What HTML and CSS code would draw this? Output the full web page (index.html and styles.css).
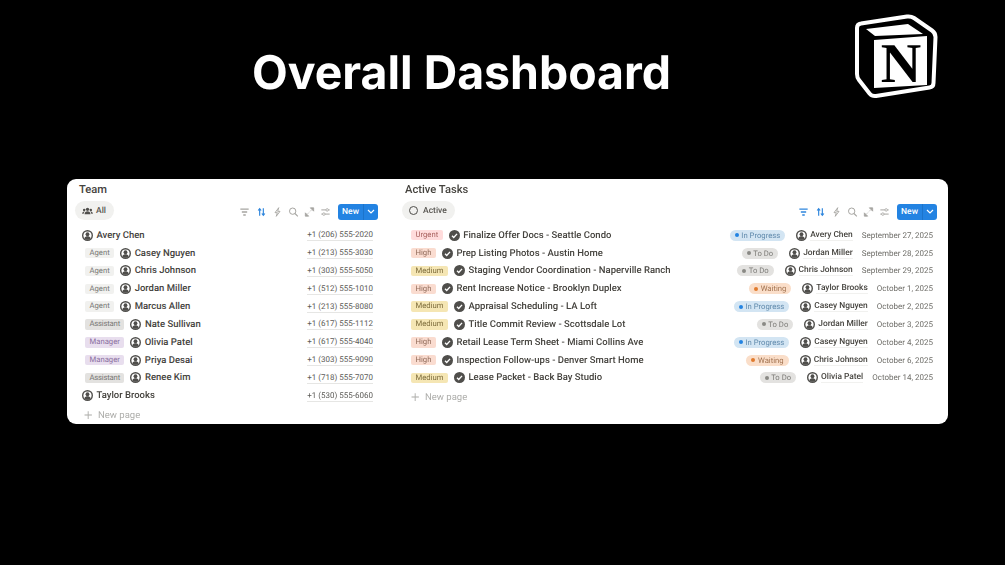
FILE: index.html
```html
<!DOCTYPE html>
<html lang="en">
<head>
<meta charset="utf-8">
<title>Overall Dashboard</title>
<link rel="stylesheet" href="styles.css">
</head>
<body>
<svg class="defs" width="0" height="0" aria-hidden="true">
  <symbol id="person" viewBox="0 0 20 20"><circle cx="10" cy="10" r="10" fill="#4f4e4b"/><circle cx="10" cy="10" r="7.4" fill="#fff"/><circle cx="10" cy="7.800" r="3.500" fill="#4f4e4b"/><path d="M4.200 14.800c1-2.400 3.400-3.400 5.800-3.400s4.800 1 5.800 3.400c-1.400 1.700-3.600 2.800-5.800 2.800s-4.400-1.100-5.800-2.800z" fill="#4f4e4b"/></symbol>
  <symbol id="check" viewBox="0 0 20 20"><circle cx="10" cy="10" r="10" fill="#4f4e4b"/><path d="M5.500 10.400l3.100 3.100 6-6.500" fill="none" stroke="#fff" stroke-width="2.500"/></symbol>
  <symbol id="filter" viewBox="0 0 12 12"><path d="M1 2.500h10M2.800 6h6.400M4.500 9.500h3" fill="none" stroke="currentColor" stroke-width="1.700"/></symbol>
  <symbol id="sort" viewBox="0 0 12 12"><path d="M3.800 10.500V2M2 4.200l1.800-2.200 1.800 2.200M8.200 1.500V10M6.400 7.800l1.800 2.200 1.800-2.200" fill="none" stroke="currentColor" stroke-width="1.400"/></symbol>
  <symbol id="bolt" viewBox="0 0 12 12"><path d="M7.500.8L3 6.800h2.800L4.500 11.200 9 5.200H6.200z" fill="none" stroke="currentColor" stroke-width="1.100"/></symbol>
  <symbol id="search" viewBox="0 0 12 12"><circle cx="5" cy="5" r="3.800" fill="none" stroke="currentColor" stroke-width="1.200"/><path d="M7.800 7.800l3.400 3.400" stroke="currentColor" stroke-width="1.300"/></symbol>
  <symbol id="expand" viewBox="0 0 12 12"><path d="M7 1h4v4zM5 11H1V7zM8 4L6.800 5.200M4 8l1.200-1.200" fill="currentColor" stroke="currentColor" stroke-width="1"/></symbol>
  <symbol id="sliders" viewBox="0 0 12 12"><path d="M1 3.500h5.500M9.500 3.500H11M1 8.500h1.500M5.500 8.500H11" stroke="currentColor" stroke-width="1.200"/><circle cx="8" cy="3.500" r="1.500" fill="none" stroke="currentColor"/><circle cx="4" cy="8.500" r="1.500" fill="none" stroke="currentColor"/></symbol>
  <symbol id="people" viewBox="0 0 16 12"><circle cx="8" cy="3.500" r="2.500" fill="#4f4e4b"/><path d="M3.500 11c0-3 2-4.500 4.500-4.500s4.500 1.500 4.500 4.500z" fill="#4f4e4b"/><circle cx="3" cy="4.500" r="1.800" fill="#4f4e4b"/><circle cx="13" cy="4.500" r="1.800" fill="#4f4e4b"/><path d="M0 10c0-2 1.200-3.400 3-3.400.4 0 .7.100 1 .2C2.800 7.800 2.400 9 2.400 10zM16 10c0-2-1.200-3.400-3-3.400-.4 0-.7.100-1 .2 1.200 1 1.600 2.200 1.600 3.200z" fill="#4f4e4b"/></symbol>
</svg>

<header class="hero">
  <h1 class="hero-title">Overall Dashboard</h1>
  <svg class="notion-logo" viewBox="0 0 84 86" aria-label="Notion logo">
    <path d="M3 15Q3 11 7 10.500L53 3.500Q57 3 60 5L78 17.500Q81.500 20 81.500 24L79.500 70Q79.500 74 75.500 74.500L22 83Q18 83.500 15.500 80.500L5 67Q3 64.500 3 61Z" fill="#000" stroke="#fff" stroke-width="4" stroke-linejoin="round"/>
    <path d="M12 16 54 11 69 21 21 23Z" fill="#fff"/>
    <path d="M20 27 73 23 73 72 20 75Z" fill="#fff"/>
    <text class="notion-n" x="47" y="69" text-anchor="middle">N</text>
  </svg>
</header>

<main class="board">
  <section class="panel panel-team">
    <h2 class="panel-title">Team</h2>
    <div class="toolbar">
      <span class="view-pill"><svg class="pill-icon-people"><use href="#people"/></svg>All</span>
      <div class="tools">
        <svg class="tool"><use href="#filter"/></svg>
        <svg class="tool tool-on"><use href="#sort"/></svg>
        <svg class="tool"><use href="#bolt"/></svg>
        <svg class="tool"><use href="#search"/></svg>
        <svg class="tool"><use href="#expand"/></svg>
        <svg class="tool"><use href="#sliders"/></svg>
        <span class="new-btn"><span class="new-label">New</span><span class="new-caret"><svg width="8" height="5" viewBox="0 0 8 5"><path d="M1 1l3 3 3-3" fill="none" stroke="#fff" stroke-width="1.200"/></svg></span></span>
      </div>
    </div>
    <ul class="rows">
      <li class="row row-top"><svg class="ico"><use href="#person"/></svg><span class="name">Avery Chen</span><span class="phone">+1 (206) 555-2020</span></li>
      <li class="row"><span class="tag tag-gray">Agent</span><svg class="ico"><use href="#person"/></svg><span class="name">Casey Nguyen</span><span class="phone">+1 (213) 555-3030</span></li>
      <li class="row"><span class="tag tag-gray">Agent</span><svg class="ico"><use href="#person"/></svg><span class="name">Chris Johnson</span><span class="phone">+1 (303) 555-5050</span></li>
      <li class="row"><span class="tag tag-gray">Agent</span><svg class="ico"><use href="#person"/></svg><span class="name">Jordan Miller</span><span class="phone">+1 (512) 555-1010</span></li>
      <li class="row"><span class="tag tag-gray">Agent</span><svg class="ico"><use href="#person"/></svg><span class="name">Marcus Allen</span><span class="phone">+1 (213) 555-8080</span></li>
      <li class="row"><span class="tag tag-dark">Assistant</span><svg class="ico"><use href="#person"/></svg><span class="name">Nate Sullivan</span><span class="phone">+1 (617) 555-1112</span></li>
      <li class="row"><span class="tag tag-purple">Manager</span><svg class="ico"><use href="#person"/></svg><span class="name">Olivia Patel</span><span class="phone">+1 (617) 555-4040</span></li>
      <li class="row"><span class="tag tag-purple">Manager</span><svg class="ico"><use href="#person"/></svg><span class="name">Priya Desai</span><span class="phone">+1 (303) 555-9090</span></li>
      <li class="row"><span class="tag tag-dark">Assistant</span><svg class="ico"><use href="#person"/></svg><span class="name">Renee Kim</span><span class="phone">+1 (718) 555-7070</span></li>
      <li class="row row-top"><svg class="ico"><use href="#person"/></svg><span class="name">Taylor Brooks</span><span class="phone">+1 (530) 555-6060</span></li>
    </ul>
    <div class="new-page"><span class="plus">+</span>New page</div>
  </section>

  <section class="panel panel-tasks">
    <h2 class="panel-title">Active Tasks</h2>
    <div class="toolbar">
      <span class="view-pill"><span class="ring"></span>Active</span>
      <div class="tools">
        <svg class="tool tool-on"><use href="#filter"/></svg>
        <svg class="tool tool-on"><use href="#sort"/></svg>
        <svg class="tool"><use href="#bolt"/></svg>
        <svg class="tool"><use href="#search"/></svg>
        <svg class="tool"><use href="#expand"/></svg>
        <svg class="tool"><use href="#sliders"/></svg>
        <span class="new-btn"><span class="new-label">New</span><span class="new-caret"><svg width="8" height="5" viewBox="0 0 8 5"><path d="M1 1l3 3 3-3" fill="none" stroke="#fff" stroke-width="1.200"/></svg></span></span>
      </div>
    </div>
    <ul class="rows">
      <li class="row"><span class="tag tag-red">Urgent</span><svg class="ico"><use href="#check"/></svg><span class="name">Finalize Offer Docs - Seattle Condo</span><span class="meta"><span class="status st-blue"><i class="dot"></i>In Progress</span><svg class="ico"><use href="#person"/></svg><span class="owner">Avery Chen</span><span class="date">September 27, 2025</span></span></li>
      <li class="row"><span class="tag tag-peach">High</span><svg class="ico"><use href="#check"/></svg><span class="name">Prep Listing Photos - Austin Home</span><span class="meta"><span class="status st-gray"><i class="dot"></i>To Do</span><svg class="ico"><use href="#person"/></svg><span class="owner">Jordan Miller</span><span class="date">September 28, 2025</span></span></li>
      <li class="row"><span class="tag tag-yellow">Medium</span><svg class="ico"><use href="#check"/></svg><span class="name">Staging Vendor Coordination - Naperville Ranch</span><span class="meta"><span class="status st-gray"><i class="dot"></i>To Do</span><svg class="ico"><use href="#person"/></svg><span class="owner">Chris Johnson</span><span class="date">September 29, 2025</span></span></li>
      <li class="row"><span class="tag tag-peach">High</span><svg class="ico"><use href="#check"/></svg><span class="name">Rent Increase Notice - Brooklyn Duplex</span><span class="meta"><span class="status st-orange"><i class="dot"></i>Waiting</span><svg class="ico"><use href="#person"/></svg><span class="owner">Taylor Brooks</span><span class="date">October 1, 2025</span></span></li>
      <li class="row"><span class="tag tag-yellow">Medium</span><svg class="ico"><use href="#check"/></svg><span class="name">Appraisal Scheduling - LA Loft</span><span class="meta"><span class="status st-blue"><i class="dot"></i>In Progress</span><svg class="ico"><use href="#person"/></svg><span class="owner">Casey Nguyen</span><span class="date">October 2, 2025</span></span></li>
      <li class="row"><span class="tag tag-yellow">Medium</span><svg class="ico"><use href="#check"/></svg><span class="name">Title Commit Review - Scottsdale Lot</span><span class="meta"><span class="status st-gray"><i class="dot"></i>To Do</span><svg class="ico"><use href="#person"/></svg><span class="owner">Jordan Miller</span><span class="date">October 3, 2025</span></span></li>
      <li class="row"><span class="tag tag-peach">High</span><svg class="ico"><use href="#check"/></svg><span class="name">Retail Lease Term Sheet - Miami Collins Ave</span><span class="meta"><span class="status st-blue"><i class="dot"></i>In Progress</span><svg class="ico"><use href="#person"/></svg><span class="owner">Casey Nguyen</span><span class="date">October 4, 2025</span></span></li>
      <li class="row"><span class="tag tag-peach">High</span><svg class="ico"><use href="#check"/></svg><span class="name">Inspection Follow-ups - Denver Smart Home</span><span class="meta"><span class="status st-orange"><i class="dot"></i>Waiting</span><svg class="ico"><use href="#person"/></svg><span class="owner">Chris Johnson</span><span class="date">October 6, 2025</span></span></li>
      <li class="row"><span class="tag tag-yellow">Medium</span><svg class="ico"><use href="#check"/></svg><span class="name">Lease Packet - Back Bay Studio</span><span class="meta"><span class="status st-gray"><i class="dot"></i>To Do</span><svg class="ico"><use href="#person"/></svg><span class="owner">Olivia Patel</span><span class="date">October 14, 2025</span></span></li>
    </ul>
    <div class="new-page"><span class="plus">+</span>New page</div>
  </section>
</main>
</body>
</html>
```

FILE: styles.css
```css
* { box-sizing: border-box; }
html, body { margin: 0; padding: 0; }
body {
  width: 1005px;
  height: 565px;
  overflow: hidden;
  background: #000;
  font-family: Roboto, "Noto Sans", sans-serif;
  color: #37352f;
  text-rendering: geometricPrecision;
}
.defs { position: absolute; }

.hero {
  height: 179px;
  padding: 13px 67px 0 252px;
  display: flex;
  justify-content: space-between;
  align-items: flex-start;
  filter: blur(0.3px);
}
.hero-title {
  margin: 28px 0 0;
  font-family: Inter, "Liberation Sans", sans-serif;
  font-size: 46.400px;
  line-height: 64px;
  font-weight: 700;
  color: #fff;
  white-space: nowrap;
}
.notion-logo { width: 84px; height: 86px; flex: none; }
.notion-n {
  font-family: "Liberation Serif", serif;
  font-weight: 700;
  font-size: 56px;
  fill: #000;
}

.board {
  height: 245px;
  margin: 0 57px 0 67px;
  background: #fff;
  border-radius: 9px;
  display: grid;
  grid-template-columns: 328px 1fr;
  filter: blur(0.35px);
}
.panel-team { padding: 0 17px 0 8px; }
.panel-tasks { padding: 0 11px 0 7px; }
.panel-title {
  margin: 0 0 0 4px;
  font-size: 11.200px;
  line-height: 21px;
  font-weight: 500;
  color: #45433e;
}
.panel-tasks .panel-title { margin-left: 3px; }

.toolbar {
  height: 19px;
  margin-top: 1px;
  display: flex;
  justify-content: space-between;
  align-items: center;
}
.view-pill {
  height: 19px;
  padding: 0 8px 0 7px;
  display: flex;
  align-items: center;
  gap: 3px;
  border-radius: 10px;
  background: #f1f1ef;
  font-size: 8.500px;
  font-weight: 500;
  color: #55534e;
}
.pill-icon-people { width: 11px; height: 8px; }
.ring {
  width: 9px;
  height: 9px;
  margin-right: 2px;
  border: 1.500px solid #4f4e4b;
  border-radius: 50%;
}
.tools { display: flex; align-items: center; gap: 5.200px; margin-top: 2px; }
.tool { width: 11px; height: 10px; color: #a6a5a1; }
.tool-on { color: #2f86dd; }
.new-btn {
  width: 40px;
  height: 16px;
  margin-left: 1.500px;
  display: flex;
  border-radius: 3px;
  background: #2383e2;
  color: #fff;
  font-size: 8.500px;
  font-weight: 500;
  line-height: 17px;
}
.new-label { width: 25px; text-align: center; }
.new-caret {
  flex: 1;
  display: flex;
  align-items: center;
  justify-content: center;
  border-left: 1px solid #1c74cb;
}

.rows { margin: 6.300px 0 0; padding: 0; list-style: none; }
.row {
  height: 17.850px;
  padding: 0 5px 0 10px;
  display: flex;
  align-items: center;
  font-size: 9.500px;
  white-space: nowrap;
}
.panel-tasks .row { padding: 0 4px 0 9px; }
.panel-team .row-top { padding-left: 7px; }
.tag {
  height: 10.500px;
  margin-right: 6px;
  padding: 0 4.500px;
  border-radius: 2px;
  font-size: 7.700px;
  line-height: 10.500px;
  flex: none;
}
.tag-gray { background: #f1f1ef; color: #787774; }
.tag-dark { background: #e3e2e0; color: #787774; letter-spacing: -0.2px; }
.tag-purple { background: #e8deee; color: #8a6fa0; }
.tag-red { background: #ffdcdc; color: #a8615e; }
.tag-peach { background: #fadcd0; color: #8f6a58; }
.tag-yellow { background: #f5e6b4; color: #7e6d3c; }
.ico { width: 11px; height: 11px; flex: none; }
.name { margin-left: 3.500px; font-weight: 500; color: #45433e; }
.phone {
  margin-left: auto;
  font-size: 8px;
  line-height: 11px;
  color: #5c5b57;
  border-bottom: 1px solid #e6e6e4;
}
.meta { margin-left: auto; display: flex; align-items: center; }
.status {
  height: 11px;
  margin-right: 11px;
  padding: 0 5px;
  display: flex;
  align-items: center;
  gap: 2.500px;
  border-radius: 6px;
  font-size: 7.700px;
}
.dot { width: 4px; height: 4px; border-radius: 50%; }
.st-blue { background: #d3e5f3; color: #5f89ab; }
.st-blue .dot { background: #2383e2; }
.st-gray { background: #e3e2e0; color: #7d7c78; }
.st-gray .dot { background: #8a8985; }
.st-orange { background: #fadec9; color: #a27350; }
.st-orange .dot { background: #e07b2e; }
.owner {
  margin-left: 3px;
  font-size: 8.400px;
  font-weight: 500;
  color: #45433e;
  border-bottom: 1px solid #f1f1ef;
}
.date { margin-left: 9px; font-size: 8px; color: #6f6e69; }

.new-page {
  margin: 1.500px 0 0 9px;
  height: 18px;
  display: flex;
  align-items: center;
  font-size: 9.500px;
  color: #aeaeab;
}
.plus { width: 14px; font-size: 15px; line-height: 18px; font-weight: 300; }
```
